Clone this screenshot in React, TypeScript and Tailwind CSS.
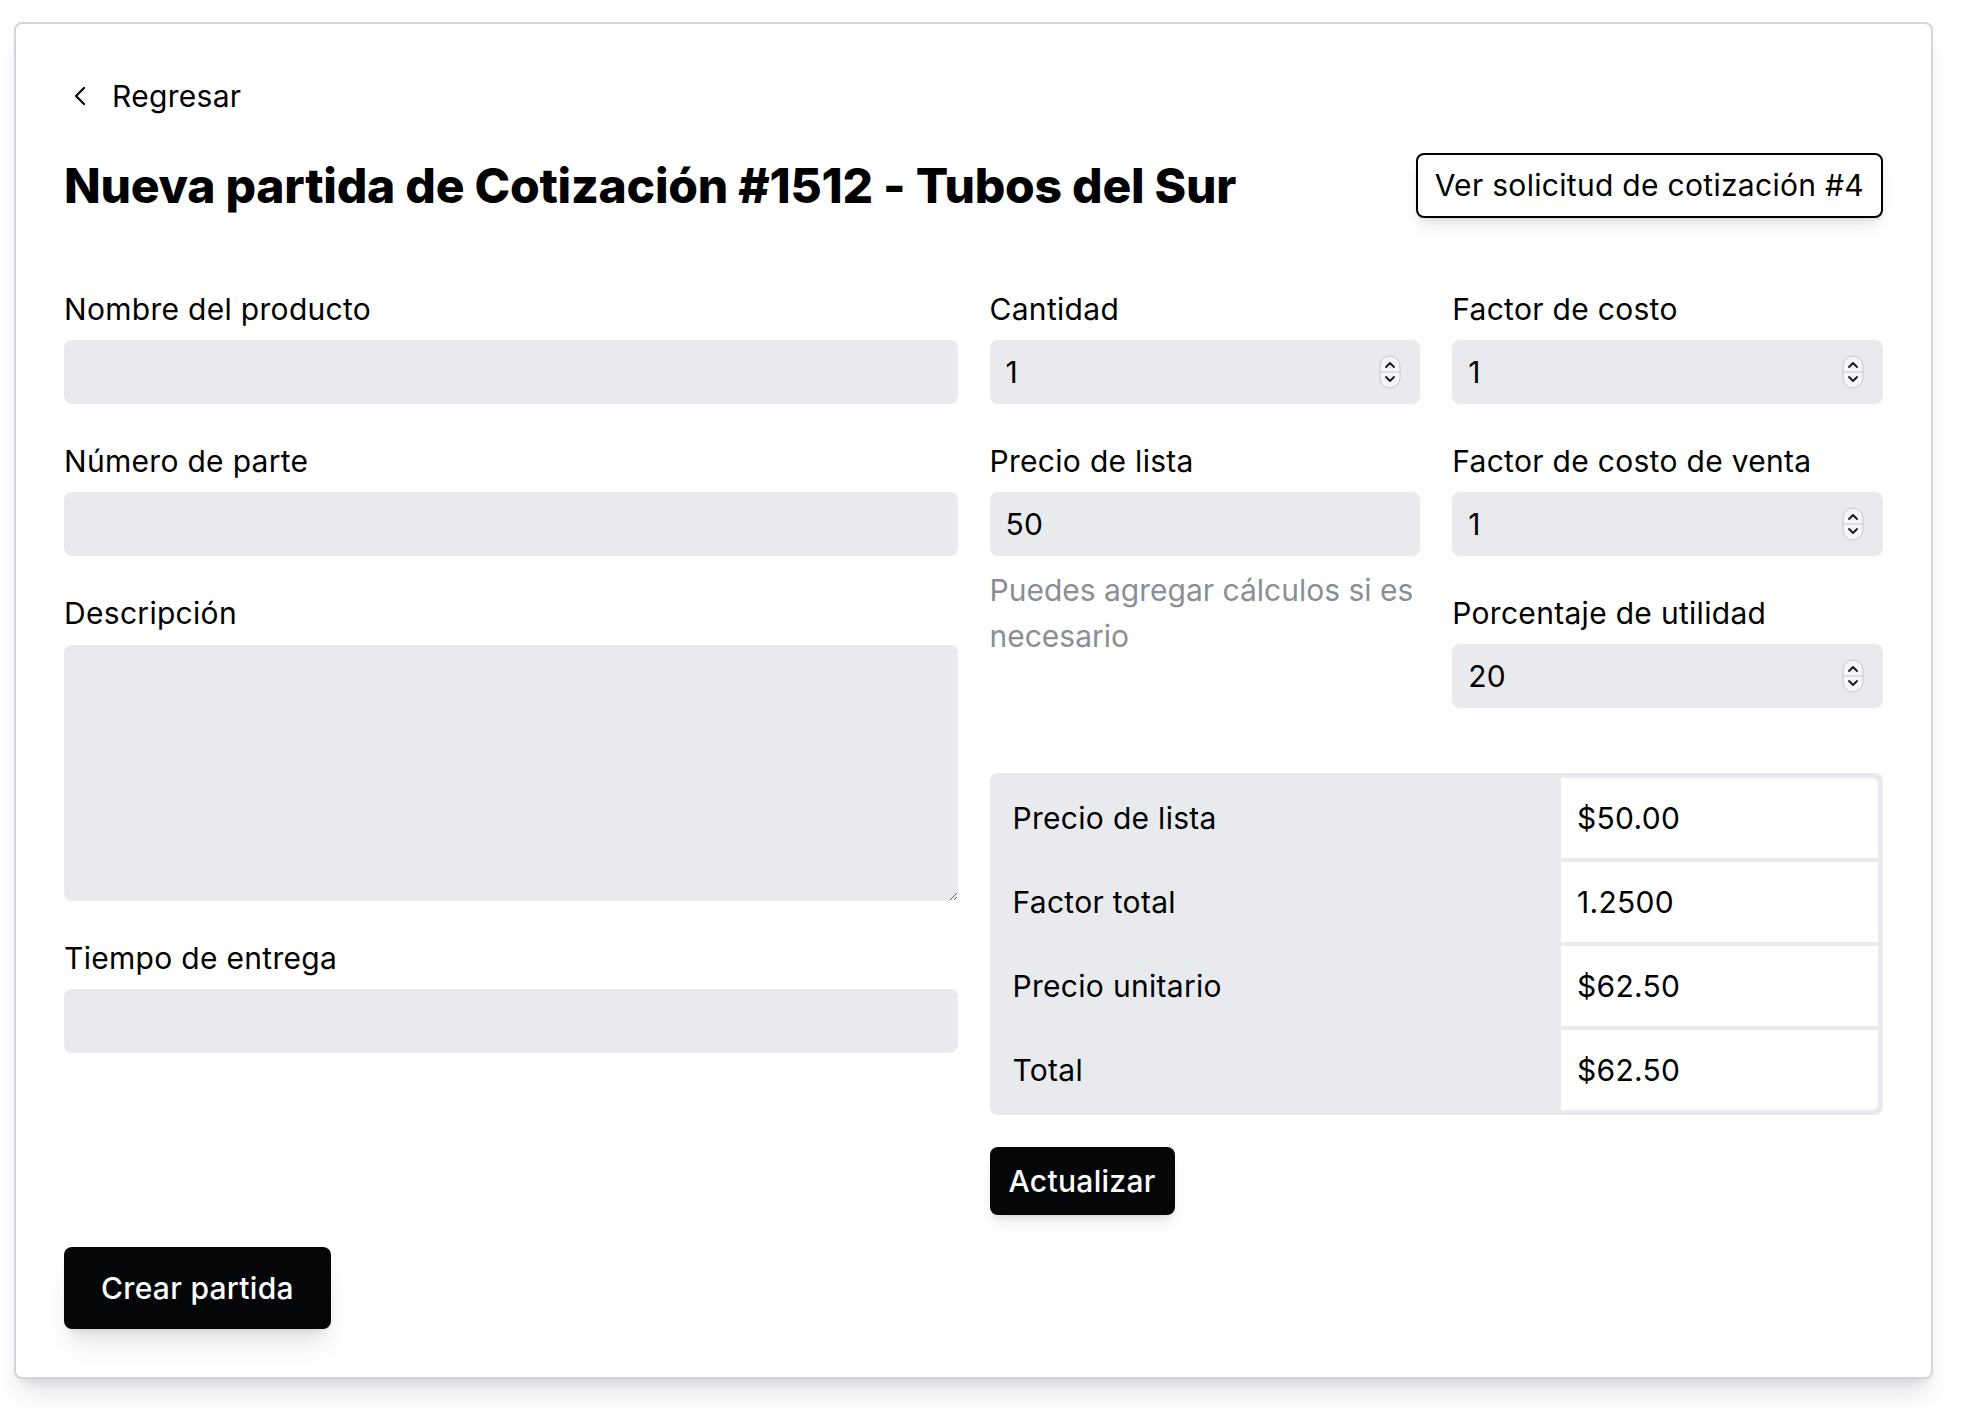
import React from "react";
import { ChevronLeft } from "lucide-react";

const totals = [
  { label: "Precio de lista", value: "$50.00" },
  { label: "Factor total", value: "1.2500" },
  { label: "Precio unitario", value: "$62.50" },
  { label: "Total", value: "$62.50" },
];

// little stepper drawn over number inputs
const Spinner = () => (
  <span className="pointer-events-none absolute right-[19px] top-1/2 -translate-y-1/2">
    <svg width="22" height="34" viewBox="0 0 22 34" fill="none">
      <rect x="1" y="1" width="20" height="32" rx="10" fill="#f5f6f8" stroke="#c4c6cb" />
      <line x1="1.5" y1="17" x2="20.5" y2="17" stroke="#c4c6cb" />
      <path d="M7 12 11 8l4 4" stroke="#111827" strokeWidth="1.8" strokeLinecap="round" strokeLinejoin="round" />
      <path d="M7 22l4 4 4-4" stroke="#111827" strokeWidth="1.8" strokeLinecap="round" strokeLinejoin="round" />
    </svg>
  </span>
);

type FieldProps = {
  label: string;
  value?: string;
  number?: boolean;
  children?: React.ReactNode;
};

const Field = ({ label, value = "", number = false, children }: FieldProps) => (
  <div className="flex flex-col">
    <label className="leading-[42px]">{label}</label>
    <div className="relative mt-[10px]">
      <input
        type="text"
        defaultValue={value}
        className="h-16 w-full rounded-lg bg-[#e9eaee] pl-4 pr-12 text-[30px] tracking-[0.01em] text-black outline-none"
      />
      {number && <Spinner />}
    </div>
    {children}
  </div>
);

export default function App() {
  return (
    <div className="min-h-screen bg-white pl-[14px] pr-[47px] pt-[22px] font-['Inter',sans-serif] text-[30px] tracking-[0.01em] text-black">
      <div className="rounded-lg border-2 border-gray-300 bg-white p-12 shadow-xl">
        <button className="flex items-center gap-4 pt-[3px] leading-[42px]">
          <ChevronLeft size={32} strokeWidth={1.6} />
          <span>Regresar</span>
        </button>

        <div className="mt-9 flex items-center justify-between">
          <h1 className="text-5xl font-extrabold tracking-[-0.005em]">
            Nueva partida de Cotización #1512 - Tubos del Sur
          </h1>
          <button className="h-[65px] rounded-lg border-2 border-black bg-white px-[17px] shadow-lg">
            Ver solicitud de cotización #4
          </button>
        </div>

        <div className="mt-[70px] grid grid-cols-2 gap-x-8">
          <div className="flex flex-col gap-9">
            <Field label="Nombre del producto" />
            <Field label="Número de parte" />
            <div className="flex flex-col">
              <label className="leading-[42px]">Descripción</label>
              <textarea className="mt-[11px] h-64 w-full rounded-lg bg-[#e9eaee] p-4 outline-none" />
            </div>
            <Field label="Tiempo de entrega" />
          </div>

          <div className="flex flex-col">
            <div className="grid grid-cols-2 gap-x-8">
              <div className="flex flex-col gap-9">
                <Field label="Cantidad" value="1" number />
                <Field label="Precio de lista" value="50">
                  <p className="mt-[11px] leading-[46px] tracking-normal text-[#8b8e94]">
                    Puedes agregar cálculos si es necesario
                  </p>
                </Field>
              </div>
              <div className="flex flex-col gap-9">
                <Field label="Factor de costo" value="1" number />
                <Field label="Factor de costo de venta" value="1" number />
                <Field label="Porcentaje de utilidad" value="20" number />
              </div>
            </div>

            <div className="mt-[65px] rounded-lg bg-[#e9eaee] p-px">
              <table className="w-full border-separate border-spacing-1">
                <tbody>
                  {totals.map((row, i) => (
                    <tr key={row.label}>
                      <td className="h-20 pl-[18px]">{row.label}</td>
                      <td
                        className={
                          "h-20 w-[317px] bg-white pl-4 " +
                          (i === 0 ? "rounded-tr-md" : i === totals.length - 1 ? "rounded-br-md" : "")
                        }
                      >
                        {row.value}
                      </td>
                    </tr>
                  ))}
                </tbody>
              </table>
            </div>

            <div className="mt-8">
              <button className="h-[68px] rounded-lg bg-[#050608] px-[19px] font-medium text-white shadow-lg">
                Actualizar
              </button>
            </div>
          </div>
        </div>

        <button className="mt-8 h-[82px] rounded-lg bg-[#050608] px-[37px] font-medium text-white shadow-xl">
          Crear partida
        </button>
      </div>
    </div>
  );
}
